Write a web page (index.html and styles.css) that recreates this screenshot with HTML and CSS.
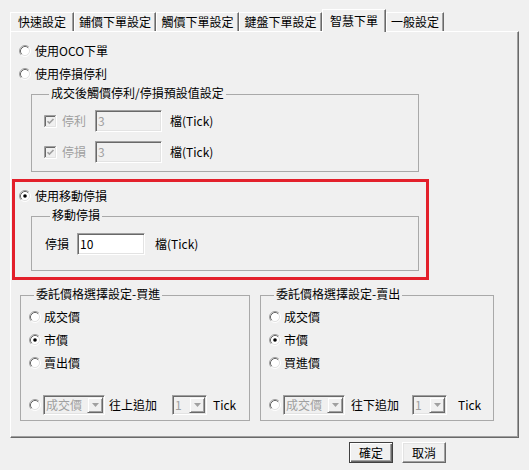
FILE: index.html
```html
<!DOCTYPE html>
<html lang="zh-Hant">
<head>
<meta charset="utf-8">
<title>智慧下單</title>
<link rel="stylesheet" href="styles.css">
</head>
<body>
<svg class="defs" aria-hidden="true">
  <symbol id="rb" viewBox="0 0 12 12">
    <circle cx="6" cy="6" r="4.5" fill="#fff"/>
    <path d="M2.11 9.89A5.5 5.5 0 0 1 9.89 2.11" fill="none" stroke="#a0a0a0"/>
    <path d="M9.89 2.11A5.5 5.5 0 0 1 2.11 9.89" fill="none" stroke="#fff"/>
    <path d="M2.82 9.18A4.5 4.5 0 0 1 9.18 2.82" fill="none" stroke="#696969"/>
    <path d="M9.18 2.82A4.5 4.5 0 0 1 2.82 9.18" fill="none" stroke="#e3e3e3"/>
  </symbol>
  <symbol id="rb-on" viewBox="0 0 12 12">
    <use href="#rb"/>
    <circle cx="6" cy="6" r="1.8" fill="#000"/>
  </symbol>
  <symbol id="cb-dis" viewBox="0 0 13 13">
    <rect x="1" y="1" width="11" height="11" fill="#f0f0f0"/>
    <path d="M0.5 12V0.5H12" fill="none" stroke="#a0a0a0"/>
    <path d="M0.5 12.5H12.5V0.5" fill="none" stroke="#fff"/>
    <path d="M1.5 11V1.5H11" fill="none" stroke="#696969"/>
    <path d="M1.5 11.5H11.5V1.5" fill="none" stroke="#e3e3e3"/>
    <path d="M3.5 6.2L5.4 8.1L9.5 4" fill="none" stroke="#a0a0a0" stroke-width="1.6"/>
  </symbol>
  <symbol id="arrow" viewBox="0 0 7 4">
    <path d="M0 0H7L3.5 4Z" fill="#a0a0a0"/>
  </symbol>
</svg>

<div class="window">
  <div class="tabs">
    <div class="tab t1">快速設定</div>
    <div class="tab t2">鋪價下單設定</div>
    <div class="tab t3">觸價下單設定</div>
    <div class="tab t4">鍵盤下單設定</div>
    <div class="tab tab-active t5">智慧下單</div>
    <div class="tab t6">一般設定</div>
  </div>

  <div class="panel">
    <div class="row opt">
      <svg class="radio"><use href="#rb"/></svg><span>使用OCO下單</span>
    </div>
    <div class="row opt">
      <svg class="radio"><use href="#rb"/></svg><span>使用停損停利</span>
    </div>

    <fieldset class="group g1">
      <legend>成交後觸價停利/停損預設值設定</legend>
      <div class="row field-row">
        <svg class="check"><use href="#cb-dis"/></svg>
        <span class="lbl-disabled">停利</span>
        <div class="input input-disabled">3</div>
        <span>檔(Tick)</span>
      </div>
      <div class="row field-row">
        <svg class="check"><use href="#cb-dis"/></svg>
        <span class="lbl-disabled">停損</span>
        <div class="input input-disabled">3</div>
        <span>檔(Tick)</span>
      </div>
    </fieldset>

    <div class="highlight">
      <div class="row opt">
        <svg class="radio"><use href="#rb-on"/></svg><span>使用移動停損</span>
      </div>
      <fieldset class="group g2">
        <legend>移動停損</legend>
        <div class="row trail-row">
          <span class="trail-lbl">停損</span>
          <div class="input trail-input">10</div>
          <span>檔(Tick)</span>
        </div>
      </fieldset>
    </div>

    <div class="price-groups">
      <fieldset class="group g3">
        <legend>委託價格選擇設定-買進</legend>
        <div class="row opt"><svg class="radio"><use href="#rb"/></svg><span>成交價</span></div>
        <div class="row opt"><svg class="radio"><use href="#rb-on"/></svg><span>市價</span></div>
        <div class="row opt"><svg class="radio"><use href="#rb"/></svg><span>賣出價</span></div>
        <div class="row last-row">
          <svg class="radio"><use href="#rb"/></svg>
          <div class="combo combo-main"><span class="combo-text">成交價</span><span class="combo-btn"><svg class="arrow"><use href="#arrow"/></svg></span></div>
          <span class="append">往上追加</span>
          <div class="combo combo-small"><span class="combo-text">1</span><span class="combo-btn"><svg class="arrow"><use href="#arrow"/></svg></span></div>
          <span>Tick</span>
        </div>
      </fieldset>
      <fieldset class="group g4">
        <legend>委託價格選擇設定-賣出</legend>
        <div class="row opt"><svg class="radio"><use href="#rb"/></svg><span>成交價</span></div>
        <div class="row opt"><svg class="radio"><use href="#rb-on"/></svg><span>市價</span></div>
        <div class="row opt"><svg class="radio"><use href="#rb"/></svg><span>買進價</span></div>
        <div class="row last-row">
          <svg class="radio"><use href="#rb"/></svg>
          <div class="combo combo-main"><span class="combo-text">成交價</span><span class="combo-btn"><svg class="arrow"><use href="#arrow"/></svg></span></div>
          <span class="append">往下追加</span>
          <div class="combo combo-small"><span class="combo-text">1</span><span class="combo-btn"><svg class="arrow"><use href="#arrow"/></svg></span></div>
          <span>Tick</span>
        </div>
      </fieldset>
    </div>
  </div>

  <div class="buttons">
    <button class="btn btn-default" type="button">確定</button>
    <button class="btn" type="button">取消</button>
  </div>
</div>
</body>
</html>
```

FILE: styles.css
```css
html, body {
  margin: 0;
  padding: 0;
  background: #f0f0f0;
}

body {
  font-family: "Noto Sans CJK TC", "Noto Sans", sans-serif;
  font-size: 12px;
  line-height: 14px;
  color: #000;
}

.defs {
  display: block;
  width: 0;
  height: 0;
  overflow: hidden;
}

.window {
  width: 529px;
  height: 470px;
  box-sizing: border-box;
  padding-top: 9px;
}

/* ---------- tabs ---------- */
.tabs {
  display: flex;
  align-items: flex-end;
  height: 22px;
  margin-left: 10px;
}

.tab {
  box-sizing: border-box;
  height: 19px;
  border-top: 1px solid #fff;
  border-left: 1px solid #fff;
  border-right: 1px solid #696969;
  box-shadow: inset -1px 0 0 #a0a0a0;
  display: flex;
  align-items: center;
  justify-content: center;
  white-space: nowrap;
}

.tab-active {
  height: 23px;
  margin-bottom: -1px;
  padding-bottom: 1px;
  position: relative;
  z-index: 1;
  background: #f0f0f0;
}

.t1 { width: 64px; }
.t2 { width: 82px; }
.t3 { width: 83px; }
.t4 { width: 83px; }
.t5 { width: 64px; }
.t6 { width: 58px; }

/* ---------- panel ---------- */
.panel {
  box-sizing: border-box;
  width: 509px;
  height: 407px;
  margin-left: 10px;
  border-top: 1px solid #fff;
  border-left: 1px solid #fff;
  border-right: 1px solid #696969;
  border-bottom: 1px solid #696969;
  box-shadow: inset -1px -1px 0 #a0a0a0;
  padding-top: 7px;
}

.row {
  display: flex;
  align-items: center;
  white-space: nowrap;
}

.opt {
  height: 23px;
  padding-left: 8px;
}

.radio {
  width: 12px;
  height: 12px;
  flex: none;
  margin-right: 4px;
}

/* ---------- group boxes ---------- */
.group {
  margin: 0;
  padding: 0;
  border: 1px solid #a9a9a9;
  box-sizing: border-box;
  min-inline-size: 0;
}

.group legend {
  margin-left: 5px;
  padding: 0 2px;
  line-height: 14px;
  position: relative;
  top: -1px;
}

.g1 {
  margin: 2px 0 0 20px;
  width: 388px;
  padding: 9px 0 8px 12px;
}

.field-row {
  height: 22px;
}

.field-row + .field-row {
  margin-top: 9px;
}

.check {
  width: 13px;
  height: 13px;
  flex: none;
  margin-right: 5px;
}

.lbl-disabled {
  color: #a0a0a0;
  width: 24px;
  margin-right: 9px;
}

.input {
  box-sizing: border-box;
  height: 22px;
  border: 1px solid;
  border-color: #a0a0a0 #fff #fff #a0a0a0;
  box-shadow: inset 1px 1px 0 #696969, inset -1px -1px 0 #e3e3e3;
  padding-left: 2px;
  display: flex;
  align-items: center;
  background: #fff;
}

.input-disabled {
  width: 67px;
  margin-right: 8px;
  background: #f0f0f0;
  color: #a0a0a0;
}

/* ---------- highlighted section ---------- */
.highlight {
  box-sizing: border-box;
  width: 417px;
  margin: 7px 0 0 1px;
  border: 3px solid #e3202b;
  padding: 2px 0 6px 0;
}

.highlight .opt {
  padding-left: 4px;
}

.g2 {
  margin: 2px 0 0 16px;
  width: 388px;
  padding: 10px 0 15px 13px;
}

.trail-row {
  height: 22px;
}

.trail-lbl {
  margin-right: 8px;
}

.trail-input {
  width: 68px;
  margin-right: 10px;
}

/* ---------- price groups ---------- */
.price-groups {
  display: flex;
  gap: 10px;
  margin: 8px 0 0 9px;
}

.g3,
.g4 {
  padding: 3px 0 4px 8px;
}

.g3 { width: 230px; }
.g4 { width: 234px; }

.price-groups .opt {
  padding-left: 0;
}

.price-groups .radio {
  margin-right: 3px;
}

.last-row {
  height: 22px;
  margin-top: 20px;
}

.last-row .radio {
  margin-right: 2px;
}

.combo {
  box-sizing: border-box;
  height: 20px;
  display: flex;
  align-items: center;
  border: 1px solid;
  border-color: #a0a0a0 #fff #fff #a0a0a0;
  box-shadow: inset 1px 1px 0 #696969, inset -1px -1px 0 #e3e3e3;
  padding: 1px;
  background: #f0f0f0;
  color: #a0a0a0;
}

.combo-text {
  flex: 1;
  padding-left: 1px;
}

.combo-btn {
  box-sizing: border-box;
  width: 16px;
  height: 16px;
  flex: none;
  display: flex;
  align-items: center;
  justify-content: center;
  border: 1px solid;
  border-color: #f0f0f0 #696969 #696969 #f0f0f0;
  box-shadow: inset 1px 1px 0 #fff, inset -1px -1px 0 #a0a0a0;
}

.arrow {
  width: 7px;
  height: 4px;
}

.combo-main {
  width: 62px;
  margin-right: 4px;
}

.append {
  margin-right: 15px;
}

.combo-small {
  width: 35px;
  margin-right: 6px;
}

.g4 .combo-main { margin-right: 6px; }
.g4 .append { margin-right: 13px; }
.g4 .combo-small { margin-right: 11px; }

/* ---------- buttons ---------- */
.buttons {
  display: flex;
  justify-content: flex-end;
  gap: 9px;
  padding-right: 83px;
  margin-top: 4px;
}

.btn {
  box-sizing: border-box;
  width: 44px;
  height: 21px;
  padding: 0;
  font: inherit;
  color: #000;
  background: #f0f0f0;
  border: 1px solid;
  border-color: #fff #696969 #696969 #fff;
  box-shadow: inset -1px -1px 0 #a0a0a0, inset 1px 1px 0 #e3e3e3;
}

.btn-default {
  border: 1px solid #404040;
  box-shadow: inset 1px 1px 0 #fff, inset -1px -1px 0 #696969, inset -2px -2px 0 #a0a0a0;
}
```
